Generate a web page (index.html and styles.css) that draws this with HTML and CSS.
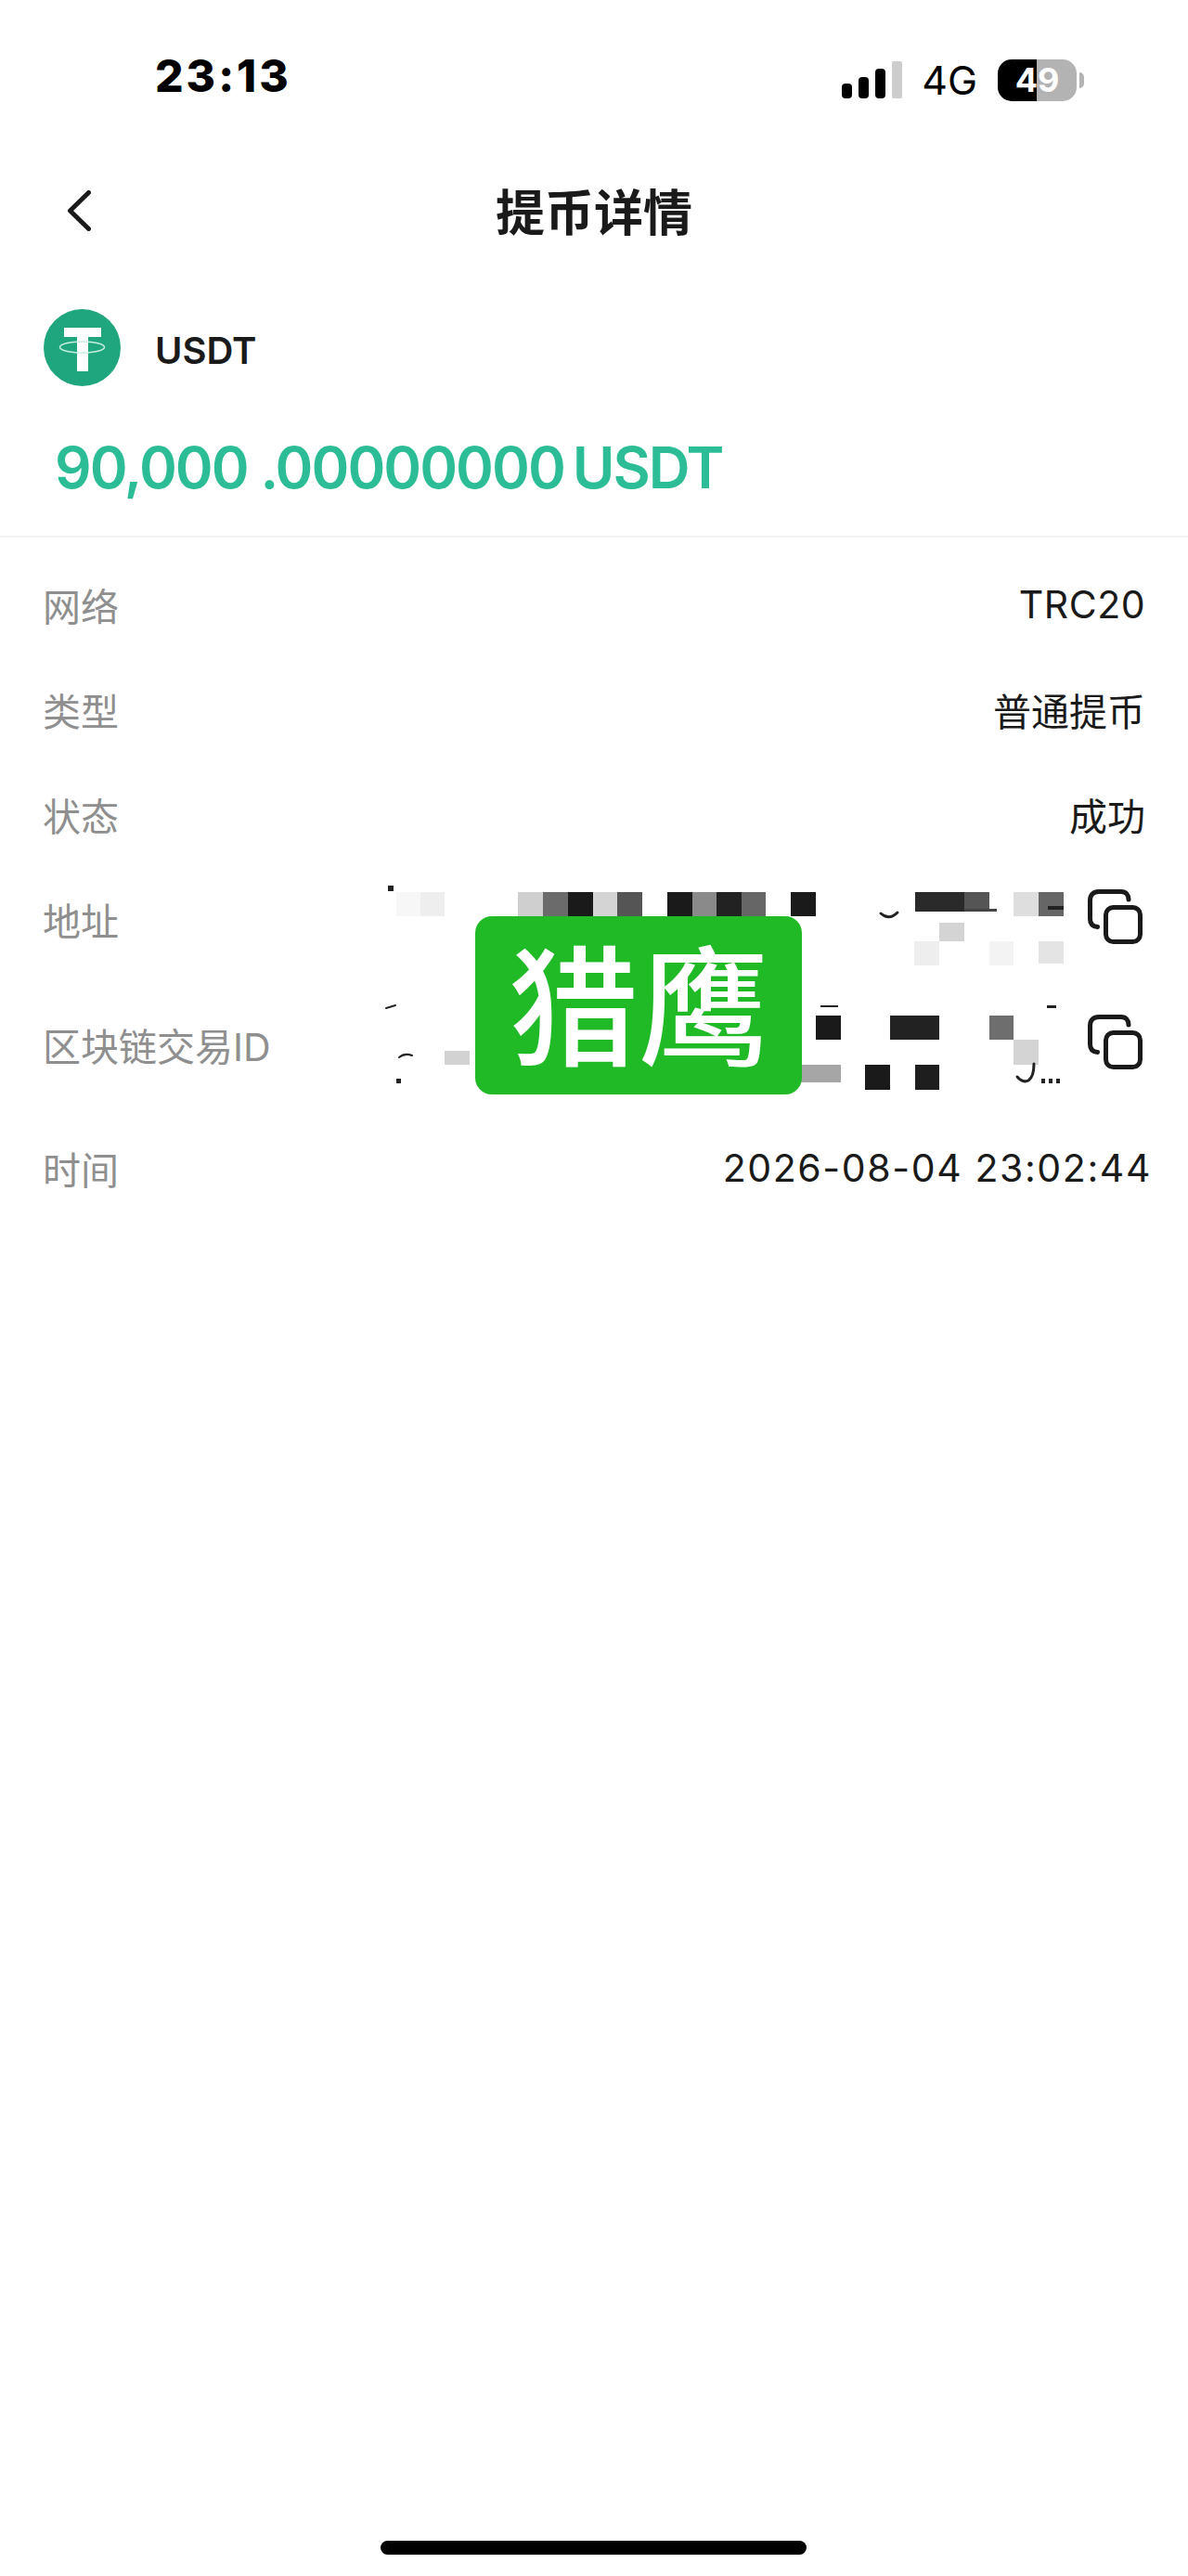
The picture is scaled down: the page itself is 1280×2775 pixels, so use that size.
FILE: index.html
```html
<!DOCTYPE html>
<html lang="zh-CN">
<head>
    <meta charset="UTF-8">
    <meta name="viewport" content="width=device-width, initial-scale=1.0">
    <title>提币详情</title>
    <link rel="stylesheet" href="styles.css">
</head>
<body>
    <div class="status-bar">
        <div class="status-time">23:13</div>
        <div class="status-icons">
            <div class="signal">
                <span class="bar bar-1"></span>
                <span class="bar bar-2"></span>
                <span class="bar bar-3"></span>
                <span class="bar bar-4"></span>
            </div>
            <div class="network">4G</div>
            <div class="battery">
                <div class="battery-body"><span>49</span></div>
                <div class="battery-nub"></div>
            </div>
        </div>
    </div>

    <div class="nav-bar">
        <svg class="back-icon" width="26" height="44" viewBox="0 0 26 44">
            <path d="M23.5 2.5 L3.5 22 L23.5 41.5" fill="none" stroke="#1a1a1a" stroke-width="5" stroke-linecap="round" stroke-linejoin="round"/>
        </svg>
        <div class="nav-title">提币详情</div>
    </div>

    <div class="coin-row">
        <svg class="coin-logo" width="83" height="83" viewBox="0 0 83 83">
            <circle cx="41.5" cy="41.5" r="41.5" fill="#20a67e"/>
            <path d="M22 20 H62 V30 H48 V67 H36 V30 H22 Z" fill="#fff"/>
            <ellipse cx="41.5" cy="41" rx="24" ry="6" fill="none" stroke="#c9eee0" stroke-width="1.5"/>
        </svg>
        <div class="coin-name">USDT</div>
    </div>

    <div class="amount">
        <span>90,000</span><span class="amount-dot">.00000000</span><span class="amount-unit">USDT</span>
    </div>

    <div class="details">
        <div class="row">
            <div class="label">网络</div>
            <div class="value value-latin">TRC20</div>
        </div>
        <div class="row">
            <div class="label">类型</div>
            <div class="value">普通提币</div>
        </div>
        <div class="row">
            <div class="label">状态</div>
            <div class="value">成功</div>
        </div>
        <div class="row">
            <div class="label">地址</div>
            <div class="hash">
                <svg class="mosaic" width="745" height="113" viewBox="410 936 745 113">
                    <rect x="419" y="955" width="6" height="6" fill="#222"/>
                    <rect x="428" y="962" width="26" height="26" fill="#f7f7f7"/>
                    <rect x="454" y="962" width="26" height="26" fill="#eeeeee"/>
                    <rect x="559" y="962" width="27" height="26" fill="#cfcfcf"/>
                    <rect x="586" y="962" width="27" height="26" fill="#6b6b6b"/>
                    <rect x="613" y="962" width="27" height="26" fill="#1a1a1a"/>
                    <rect x="640" y="962" width="26" height="26" fill="#d4d4d4"/>
                    <rect x="666" y="962" width="27" height="26" fill="#555555"/>
                    <rect x="720" y="962" width="27" height="26" fill="#1a1a1a"/>
                    <rect x="747" y="962" width="26" height="26" fill="#8a8a8a"/>
                    <rect x="773" y="962" width="27" height="26" fill="#222222"/>
                    <rect x="800" y="962" width="26" height="26" fill="#666666"/>
                    <rect x="853" y="962" width="27" height="26" fill="#1a1a1a"/>
                    <path d="M950 985 Q959 993 968 984" fill="none" stroke="#222" stroke-width="3" stroke-linecap="round"/>
                    <rect x="987" y="962" width="53" height="21" fill="#2a2a2a"/>
                    <rect x="1040" y="962" width="27" height="21" fill="#555555"/>
                    <rect x="1040" y="980" width="35" height="3" fill="#444"/>
                    <rect x="1093" y="962" width="27" height="26" fill="#dedede"/>
                    <rect x="1120" y="962" width="27" height="26" fill="#666666"/>
                    <rect x="1130" y="977" width="17" height="4" fill="#222"/>
                    <rect x="1013" y="995" width="27" height="20" fill="#d4d4d4"/>
                    <rect x="986" y="1015" width="27" height="26" fill="#eeeeee"/>
                    <rect x="1067" y="1015" width="26" height="26" fill="#f3f3f3"/>
                    <rect x="1120" y="1015" width="27" height="24" fill="#e4e4e4"/>
                </svg>
                <svg class="copy-icon" width="60" height="60" viewBox="0 0 60 60">
                    <path d="M44 11 C44 6 41 2.5 36 2.5 H12 C6 2.5 2.5 6 2.5 12 V32 C2.5 37 5 40 10.5 40.5" fill="none" stroke="#1a1a1a" stroke-width="5" stroke-linecap="round"/>
                    <rect x="19.5" y="19.5" width="37" height="37" rx="8" fill="none" stroke="#1a1a1a" stroke-width="5"/>
                </svg>
            </div>
        </div>
        <div class="row row-txid">
            <div class="label">区块链交易ID</div>
            <div class="hash">
                <svg class="mosaic" width="745" height="157" viewBox="410 1049 745 157">
                    <path d="M417 1087 L427 1084" stroke="#222" stroke-width="2" stroke-linecap="round"/>
                    <path d="M431 1140 Q437 1135 445 1138" fill="none" stroke="#222" stroke-width="2" stroke-linecap="round"/>
                    <rect x="428" y="1163" width="5" height="5" fill="#222"/>
                    <rect x="480" y="1133" width="27" height="15" fill="#d2d2d2"/>
                    <rect x="860" y="1148" width="47" height="19" fill="#a6a6a6"/>
                    <rect x="885" y="1084" width="19" height="2" fill="#222"/>
                    <rect x="880" y="1095" width="27" height="26" fill="#1a1a1a"/>
                    <rect x="960" y="1095" width="53" height="26" fill="#222222"/>
                    <rect x="1067" y="1095" width="26" height="26" fill="#6e6e6e"/>
                    <rect x="1129" y="1084" width="10" height="3" fill="#222"/>
                    <rect x="1093" y="1121" width="27" height="27" fill="#d4d4d4"/>
                    <rect x="933" y="1148" width="27" height="27" fill="#1a1a1a"/>
                    <rect x="987" y="1148" width="26" height="27" fill="#1e1e1e"/>
                    <path d="M1097 1161 Q1103 1168 1109 1165 Q1115 1161 1115 1147" fill="none" stroke="#222" stroke-width="3" stroke-linecap="round"/>
                    <rect x="1123" y="1163" width="4" height="5" fill="#222"/>
                    <rect x="1131" y="1163" width="4" height="5" fill="#222"/>
                    <rect x="1139" y="1163" width="4" height="5" fill="#222"/>
                </svg>
                <svg class="copy-icon" width="60" height="60" viewBox="0 0 60 60">
                    <path d="M44 11 C44 6 41 2.5 36 2.5 H12 C6 2.5 2.5 6 2.5 12 V32 C2.5 37 5 40 10.5 40.5" fill="none" stroke="#1a1a1a" stroke-width="5" stroke-linecap="round"/>
                    <rect x="19.5" y="19.5" width="37" height="37" rx="8" fill="none" stroke="#1a1a1a" stroke-width="5"/>
                </svg>
            </div>
        </div>
        <div class="row row-time">
            <div class="label">时间</div>
            <div class="value value-time">2026-08-04 23:02:44</div>
        </div>

        <div class="watermark">猎鹰</div>
    </div>

    <div class="home-indicator"></div>
</body>
</html>
```

FILE: styles.css
```css
body {
    margin: 0;
    height: 2775px;
    position: relative;
    overflow: hidden;
    background-color: #fff;
    color: #1a1a1a;
    font-family: Inter, "Noto Sans CJK SC", sans-serif;
}
.status-bar {
    height: 162px;
    display: flex;
    align-items: center;
    justify-content: space-between;
    padding: 0 112px 0 167px;
}
.status-time {
    color: #000;
    font-size: 48px;
    font-weight: 800;
    letter-spacing: 3px;
}
.status-icons {
    display: flex;
    align-items: center;
    margin-top: 10px;
}
.signal {
    display: flex;
    align-items: flex-end;
    gap: 7px;
    height: 40px;
}
.bar {
    width: 11px;
    border-radius: 4px;
    background: #000;
}
.bar-1 { height: 16px; }
.bar-2 { height: 23px; }
.bar-3 { height: 32px; }
.bar-4 { height: 40px; background: #cdcdcd; border-radius: 2px; }
.network {
    margin-left: 21px;
    font-size: 43px;
    font-weight: 400;
    color: #000;
    line-height: 46px;
}
.battery {
    display: flex;
    align-items: center;
    margin-left: 22px;
}
.battery-body {
    width: 85px;
    height: 45px;
    border-radius: 15px;
    background: linear-gradient(to right, #000 42px, #b3b3b3 42px);
    display: flex;
    align-items: center;
    justify-content: center;
    color: #fff;
    font-size: 36px;
    font-weight: 700;
}
.battery-nub {
    width: 5px;
    height: 17px;
    margin-left: 3px;
    border-radius: 0 5px 5px 0;
    background: #b3b3b3;
}
.nav-bar {
    height: 134px;
    display: flex;
    align-items: center;
    justify-content: center;
    position: relative;
}
.back-icon {
    position: absolute;
    left: 72px;
    top: 43px;
}
.nav-title {
    font-size: 53px;
    font-weight: 600;
    margin-top: -6px;
}
.coin-row {
    display: flex;
    align-items: center;
    gap: 37px;
    padding: 37px 0 0 47px;
}
.coin-name {
    font-size: 40px;
    font-weight: 600;
    margin-top: 6px;
}
.amount {
    display: flex;
    height: 163px;
    align-items: center;
    box-sizing: border-box;
    padding: 14px 0 0 59px;
    color: #2dbd96;
    font-size: 62px;
    font-weight: 600;
    letter-spacing: -2px;
    border-bottom: 2px solid #f3f3f3;
}
.amount-dot {
    margin-left: 14px;
}
.amount-unit {
    margin-left: 9px;
}
.details {
    position: relative;
    padding-top: 17px;
}
.row {
    height: 113px;
    display: flex;
    align-items: center;
    justify-content: space-between;
    padding: 0 46px;
}
.row-txid {
    height: 157px;
}
.row-time {
    height: 108px;
    padding-right: 39px;
}
.label {
    font-size: 41px;
    color: #8f8f8f;
    margin-top: -3px;
}
.value {
    font-size: 41px;
    margin-top: -3px;
}
.value-latin {
    letter-spacing: 0.5px;
}
.value-time {
    letter-spacing: 1.6px;
}
.hash {
    display: flex;
    align-items: center;
    gap: 18px;
    padding-right: 2px;
}
.mosaic {
    display: block;
}
.copy-icon {
    display: block;
    margin-top: -8px;
}
.watermark {
    position: absolute;
    left: 512px;
    top: 408px;
    box-sizing: border-box;
    width: 352px;
    height: 192px;
    padding-bottom: 14px;
    border-radius: 18px;
    background: #1fba26;
    color: #fff;
    font-size: 140px;
    font-weight: 500;
    display: flex;
    align-items: center;
    justify-content: center;
}
.home-indicator {
    position: absolute;
    left: 410px;
    top: 2737px;
    width: 459px;
    height: 15px;
    border-radius: 8px;
    background: #000;
}
```
